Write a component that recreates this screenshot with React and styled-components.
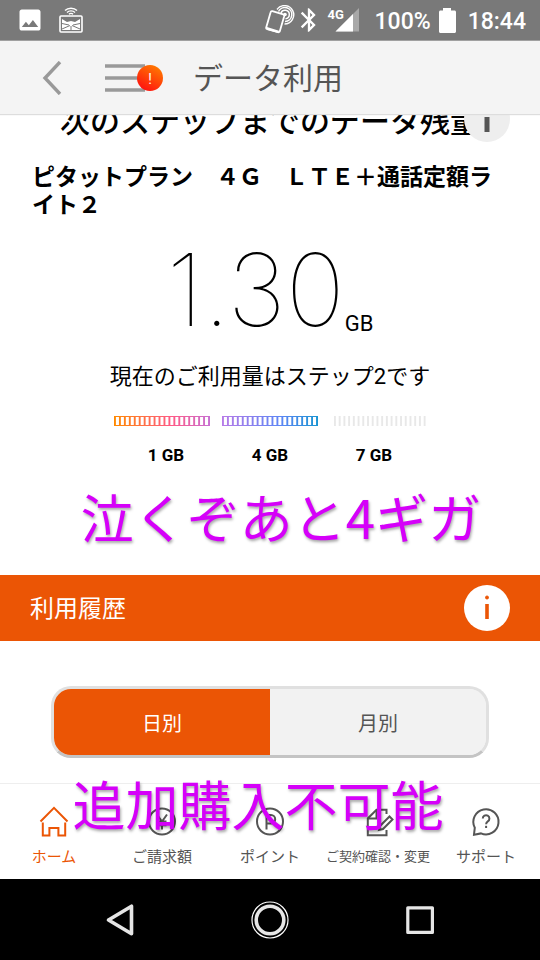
import React, { useState } from "react";
import styled, { createGlobalStyle } from "styled-components";
import { MdImage, MdBluetooth } from "react-icons/md";

const steps = [
  { label: "1 GB", from: "#ff8a00", mid: "#ff5a87", to: "#c86fd2", framed: true },
  { label: "4 GB", from: "#b77be8", mid: "#5f86f5", to: "#1a94d2", framed: true },
  { label: "7 GB", from: "#e8e8e8", mid: "#e8e8e8", to: "#e8e8e8", framed: false },
];

const StepBar = ({ id, from, mid, to, framed }) => (
  <BarSvg viewBox="0 0 96 10" preserveAspectRatio="none" aria-hidden="true">
    <defs>
      <linearGradient id={id} gradientUnits="userSpaceOnUse" x1="0" y1="0" x2="96" y2="0">
        <stop offset="0" stopColor={from} />
        <stop offset="0.6" stopColor={mid} />
        <stop offset="1" stopColor={to} />
      </linearGradient>
    </defs>
    {framed && (
      <rect x="0.5" y="0.5" width="95" height="9" fill="none" stroke={`url(#${id})`} />
    )}
    {Array.from({ length: 20 }, (_, i) => (
      <rect
        key={i}
        x={framed ? i * 4.95 : 4 + i * 4.72}
        y="0"
        width="1.9"
        height="10"
        fill={`url(#${id})`}
      />
    ))}
  </BarSvg>
);

const CastIcon = () => (
  <svg width="24" height="26" viewBox="0 0 24 26" fill="none" stroke="#fff">
    <path d="M6 3.6C9 0.4 15 0.4 18 3.6M8 5.4c2-2 6-2 8 0" strokeWidth="1.4" />
    <path d="M10 7.2c1-1 3-1 4 0" strokeWidth="1.4" />
    <rect x="1" y="9" width="22" height="16" rx="1" strokeWidth="1.6" />
    <path d="M3 12l5 3 4-1 4 1 5-3v11H3z" fill="#fff" stroke="none" />
    <path d="M3 16.500l7 1.500M21 16.500l-7 1.500M3 22l8-3.500M21 22l-8-3.500M12 19v4" stroke="#797979" strokeWidth="1" />
  </svg>
);

const NfcIcon = () => (
  <svg width="30" height="30" viewBox="0 0 30 30" fill="none" stroke="#fff">
    <path d="M7.4 6.2l10.8 3.2c.8.2 1.2 1 1 1.8l-4.4 15c-.2.8-1 1.2-1.8 1L2.2 24.2c-.8-.2-1.2-1-1-1.8l4.4-15.2c.2-.8 1-1.2 1.8-1z" strokeWidth="1.8" />
    <path d="M2 22l12 3.8-1 2.2-11-3.2z" fill="#fff" stroke="none" />
    <circle cx="20" cy="9.5" r="1.8" fill="#fff" stroke="none" />
    <path d="M16 8a4.3 4.3 0 1 1 4.5 5.800M13.500 6.500a7 7 0 1 1 6.500 10" strokeWidth="1.5" />
    <path d="M12 4.500a9.200 9.200 0 1 1 7.500 14.500" strokeWidth="1.4" />
  </svg>
);

const SignalIcon = () => (
  <svg width="24" height="24" viewBox="0 0 24 24">
    <path d="M24 0v23.5H0.5z" fill="#a8a8a8" />
    <path d="M18 6v17.5H0.5z" fill="#fff" />
  </svg>
);

const BatteryIcon = () => (
  <svg width="17" height="25" viewBox="0 0 17 25" fill="#fff">
    <path d="M4 0h8v2.5h3.5c.8 0 1.5.6 1.5 1.5v19.5c0 .9-.7 1.5-1.5 1.5h-14C.7 25 0 24.4 0 23.5V4c0-.9.7-1.5 1.5-1.5H4z" />
  </svg>
);

const HomeIcon = () => (
  <NavSvg viewBox="0 0 32 32">
    <path d="M2.5 15.5L16 1.8l13.5 13.7" />
    <path d="M4.8 16.5v13h6.600v-7.500h9v7.500h6.800v-13" />
  </NavSvg>
);

const YenIcon = () => (
  <NavSvg viewBox="0 0 32 32">
    <circle cx="16" cy="15.5" r="13" />
    <path d="M11 8.5l5 7 5-7M16 15.5v8M11.5 15.5h9M11.5 19.2h9" />
  </NavSvg>
);

const PointIcon = () => (
  <NavSvg viewBox="0 0 32 32">
    <circle cx="16" cy="15.5" r="13" />
    <path d="M12.5 23.5V9h4.500a4.200 4.200 0 0 1 0 8.400h-4.500" />
  </NavSvg>
);

const ContractIcon = () => (
  <NavSvg viewBox="0 0 32 32">
    <path d="M24.5 8V3.8H14.5L5.8 12.5v16.800h18.700V24" />
    <path d="M14.5 4v8.5H6" />
    <path d="M18 20l9.500-9.500 3 3L21 23l-4 1z" />
  </NavSvg>
);

const SupportIcon = () => (
  <NavSvg viewBox="0 0 32 32">
    <path d="M4 28.7l.8-7A12.600 12.600 0 1 1 11 27.400z" />
    <path d="M12.8 12.5a3.300 3.300 0 1 1 5 2.800c-1.200.8-1.700 1.400-1.700 2.900" />
    <path d="M16.1 19.8v2.2" />
  </NavSvg>
);

const navItems = [
  { label: "ホーム", Icon: HomeIcon, active: true },
  { label: "ご請求額", Icon: YenIcon },
  { label: "ポイント", Icon: PointIcon },
  { label: "ご契約確認・変更", Icon: ContractIcon, small: true },
  { label: "サポート", Icon: SupportIcon },
];

const App = () => {
  const [mode, setMode] = useState("day");

  return (
    <Screen>
      <GlobalStyle />
      <StatusBar>
        <MdImage size={28} />
        <StatusLeft>
          <CastIcon />
        </StatusLeft>
        <NfcIcon />
        <MdBluetooth size={28} />
        <Network>
          <NetworkType>4G</NetworkType>
          <SignalIcon />
        </Network>
        <StatusText>100%</StatusText>
        <BatteryIcon />
        <StatusText>18:44</StatusText>
      </StatusBar>

      <Header>
        <IconButton aria-label="戻る">
          <svg width="20" height="34" viewBox="0 0 20 34" fill="none" stroke="#999" strokeWidth="3.4">
            <path d="M18 1L3 17l15 16" />
          </svg>
        </IconButton>
        <MenuButton aria-label="メニュー">
          <svg width="40" height="28" viewBox="0 0 40 28" fill="none" stroke="#999" strokeWidth="3.4">
            <path d="M0 2h40M0 14h40M0 26h40" />
          </svg>
          <Badge>!</Badge>
        </MenuButton>
        <Title>データ利用</Title>
      </Header>

      <Main>
        <Remaining>
          <HeadingRow>
            <Heading>次のステップまでのデータ残量</Heading>
            <HeadingInfo aria-label="データ残量について">
              <InfoMark viewBox="0 0 46 46">
                <path d="M23 21v15" strokeWidth="5" />
                <circle cx="23" cy="12" r="2" strokeWidth="1" fill="currentColor" />
              </InfoMark>
            </HeadingInfo>
          </HeadingRow>
          <Plan>ピタットプラン　４Ｇ　ＬＴＥ＋通話定額ライト２</Plan>
          <Amount>
            <AmountValue>1.30</AmountValue>
            <AmountUnit>GB</AmountUnit>
          </Amount>
          <StepText>現在のご利用量はステップ2です</StepText>
          <Steps>
            {steps.map((step, i) => (
              <StepBar key={step.label} id={`step${i}`} {...step} />
            ))}
          </Steps>
          <StepLabels>
            {steps.map((step) => (
              <StepLabel key={step.label}>{step.label}</StepLabel>
            ))}
          </StepLabels>
          <Caption>泣くぞあと4ギガ</Caption>
        </Remaining>

        <HistoryBar>
          <HistoryTitle>利用履歴</HistoryTitle>
          <InfoButton aria-label="利用履歴について">
            <InfoMark viewBox="0 0 46 46">
              <path d="M23 19v15" strokeWidth="3.6" />
              <circle cx="23" cy="12.5" r="1.5" strokeWidth="1" fill="currentColor" />
            </InfoMark>
          </InfoButton>
        </HistoryBar>

        <Switcher>
          <SwitchButton $on={mode === "day"} onClick={() => setMode("day")}>
            日別
          </SwitchButton>
          <SwitchButton $on={mode === "month"} onClick={() => setMode("month")}>
            月別
          </SwitchButton>
        </Switcher>
      </Main>

      <BottomNav>
        {navItems.map(({ label, Icon, active, small }) => (
          <NavLink key={label} href="#" $active={active}>
            <Icon />
            <NavLabel $small={small}>{label}</NavLabel>
          </NavLink>
        ))}
        <NavCaption>追加購入不可能</NavCaption>
      </BottomNav>

      <SystemBar>
        <SystemButton aria-label="Back">
          <svg width="40" height="40" viewBox="0 0 40 40" fill="none" stroke="#e6e6e6" strokeWidth="3.6" strokeLinejoin="round">
            <path d="M8.5 20L31.5 6.2v27.600z" />
          </svg>
        </SystemButton>
        <SystemButton aria-label="Home">
          <svg width="40" height="40" viewBox="0 0 40 40" fill="none">
            <circle cx="20" cy="20" r="18" stroke="#fff" strokeWidth="1.2" />
            <circle cx="20" cy="20" r="13.8" stroke="#e6e6e6" strokeWidth="3.6" />
          </svg>
        </SystemButton>
        <SystemButton aria-label="Recents">
          <svg width="40" height="40" viewBox="0 0 40 40" fill="none" stroke="#e6e6e6" strokeWidth="3.2" strokeLinejoin="round">
            <rect x="7.8" y="7.8" width="24.6" height="24.6" />
          </svg>
        </SystemButton>
      </SystemBar>
    </Screen>
  );
};

export default App;

const GlobalStyle = createGlobalStyle`
  * {
    box-sizing: border-box;
  }

  body {
    margin: 0;
    background: #fff;
    color: #000;
    font-family: Roboto, "Noto Sans CJK JP", sans-serif;
  }

  button {
    display: flex;
    align-items: center;
    justify-content: center;
    padding: 0;
    border: 0;
    background: none;
    font: inherit;
    color: inherit;
    cursor: pointer;
  }

  svg {
    display: block;
    flex-shrink: 0;
  }
`;

const Screen = styled.div`
  display: flex;
  flex-direction: column;
  min-height: 100vh;
`;

const StatusBar = styled.div`
  display: flex;
  align-items: center;
  height: 41px;
  padding: 0 14px 0 16px;
  background: #797979;
  color: #fff;
  border-bottom: 1px solid #a0a0a0;
`;

const StatusLeft = styled.div`
  flex: 1;
  padding-left: 15px;
`;

const Network = styled.div`
  display: flex;
  position: relative;
  padding: 0 15px 0 12px;
`;

const NetworkType = styled.span`
  position: absolute;
  left: 4px;
  top: 0;
  font-size: 13px;
  line-height: 13px;
  font-weight: 700;
`;

const StatusText = styled.span`
  padding-top: 3px;
  font-size: 23px;
  line-height: 24px;
  font-weight: 500;

  & + svg {
    margin: 0 12px 0 8px;
  }
`;

const Header = styled.header`
  display: flex;
  align-items: center;
  height: 73px;
  padding: 0 42px;
  background: #f4f4f4;
  box-shadow: 0 1px 1px #ddd;
  position: relative;
  z-index: 1;
`;

const IconButton = styled.button`
  width: 20px;
`;

const MenuButton = styled.button`
  position: relative;
  margin-left: 43px;
`;

const Badge = styled.span`
  position: absolute;
  right: -18px;
  top: 1px;
  width: 26px;
  height: 26px;
  border-radius: 50%;
  background: linear-gradient(30deg, #ff1010 10%, #ff7a00 90%);
  color: #fff;
  font-size: 14px;
  line-height: 28px;
  text-align: center;
`;

const Title = styled.h1`
  margin: 0 0 0 48px;
  padding-top: 2px;
  font-size: 30px;
  line-height: 40px;
  font-weight: 400;
  color: #555;
`;

const Main = styled.main`
  flex: 1;
  overflow: hidden;
`;

const Remaining = styled.section`
  display: flex;
  flex-direction: column;
  align-items: center;
  padding: 0 30px;
`;

/* scrolled partly under the header */
const HeadingRow = styled.div`
  align-self: stretch;
  position: relative;
  margin-top: -18px;
`;

const Heading = styled.h2`
  margin: 0;
  font-size: 30px;
  line-height: 52px;
  font-weight: 500;
  text-align: center;
`;

const InfoButton = styled.button`
  width: 46px;
  height: 46px;
  border-radius: 50%;
  background: #fff;
  color: #eb5505;
`;

const HeadingInfo = styled(InfoButton)`
  position: absolute;
  right: 0;
  top: 0;
  background: #eee;
  color: #555;
`;

const InfoMark = styled.svg`
  width: 46px;
  height: 46px;
  fill: none;
  stroke: currentColor;
`;

const Plan = styled.p`
  align-self: stretch;
  margin: 16px 0 0;
  padding-left: 2px;
  font-size: 23px;
  line-height: 28px;
  font-weight: 700;
`;

const Amount = styled.div`
  display: flex;
  align-items: flex-end;
  margin-top: 20px;
`;

const AmountValue = styled.span`
  font-family: Inter, sans-serif;
  font-size: 100px;
  line-height: 100px;
  font-weight: 100;
`;

const AmountUnit = styled.span`
  padding-bottom: 4px;
  font-size: 22px;
  line-height: 24px;
`;

const StepText = styled.p`
  margin: 20px 0 0;
  font-size: 22px;
  line-height: 34px;
`;

const Steps = styled.div`
  display: flex;
  gap: 12px;
  margin-top: 22px;
`;

const BarSvg = styled.svg`
  width: 96px;
  height: 10px;
`;

const StepLabels = styled.div`
  display: flex;
  margin-top: 18px;
`;

const StepLabel = styled.span`
  width: 104px;
  font-size: 17px;
  line-height: 22px;
  font-weight: 700;
  text-align: center;
`;

const Caption = styled.p`
  margin: 20px 0 29px;
  padding-left: 22px;
  font-family: "Noto Sans CJK JP", sans-serif;
  font-size: 53px;
  line-height: 60px;
  font-weight: 400;
  color: #d500f9;
  white-space: nowrap;
  text-shadow: 1px 2px 3px rgba(0, 0, 0, 0.35);
`;

const NavCaption = styled(Caption)`
  position: absolute;
  left: 50%;
  top: -11px;
  margin: 0;
  padding: 0 24px 0 0;
  transform: translateX(-50%);
  pointer-events: none;
`;

const HistoryBar = styled.div`
  display: flex;
  align-items: center;
  justify-content: space-between;
  min-height: 66px;
  padding: 0 30px;
  background: #eb5505;
  color: #fff;
`;

const HistoryTitle = styled.h2`
  margin: 0;
  padding-top: 2px;
  font-size: 24px;
  line-height: 32px;
  font-weight: 400;
`;

const Switcher = styled.div`
  display: flex;
  margin: 45px 51px 24px;
  border: 3px solid #e0e0e0;
  border-bottom-color: #c4c4c4;
  border-radius: 20px;
  background: #f2f2f2;
  overflow: hidden;
`;

const SwitchButton = styled.button`
  flex: 1;
  height: 66px;
  font-size: 20px;
  background: ${(props) => (props.$on ? "#eb5505" : "#f2f2f2")};
  color: ${(props) => (props.$on ? "#fff" : "#555")};
`;

const BottomNav = styled.nav`
  position: relative;
  display: grid;
  grid-template-columns: repeat(5, 1fr);
  height: 96px;
  border-top: 1px solid #eee;
  background: #fff;
`;

const NavLink = styled.a`
  display: flex;
  flex-direction: column;
  align-items: center;
  min-width: 0;
  padding-top: 22px;
  text-decoration: none;
  color: ${(props) => (props.$active ? "#eb5505" : "#555")};
`;

const NavSvg = styled.svg`
  width: 32px;
  height: 32px;
  fill: none;
  stroke: currentColor;
  stroke-width: 2;
`;

const NavLabel = styled.span`
  margin-top: 8px;
  font-size: ${(props) => (props.$small ? "13px" : "15px")};
  line-height: 22px;
  white-space: nowrap;
`;

const SystemBar = styled.div`
  display: flex;
  justify-content: space-between;
  align-items: center;
  height: 81px;
  padding: 0 100px;
  background: #000;
`;

const SystemButton = styled.button`
  width: 40px;
  height: 40px;
`;
